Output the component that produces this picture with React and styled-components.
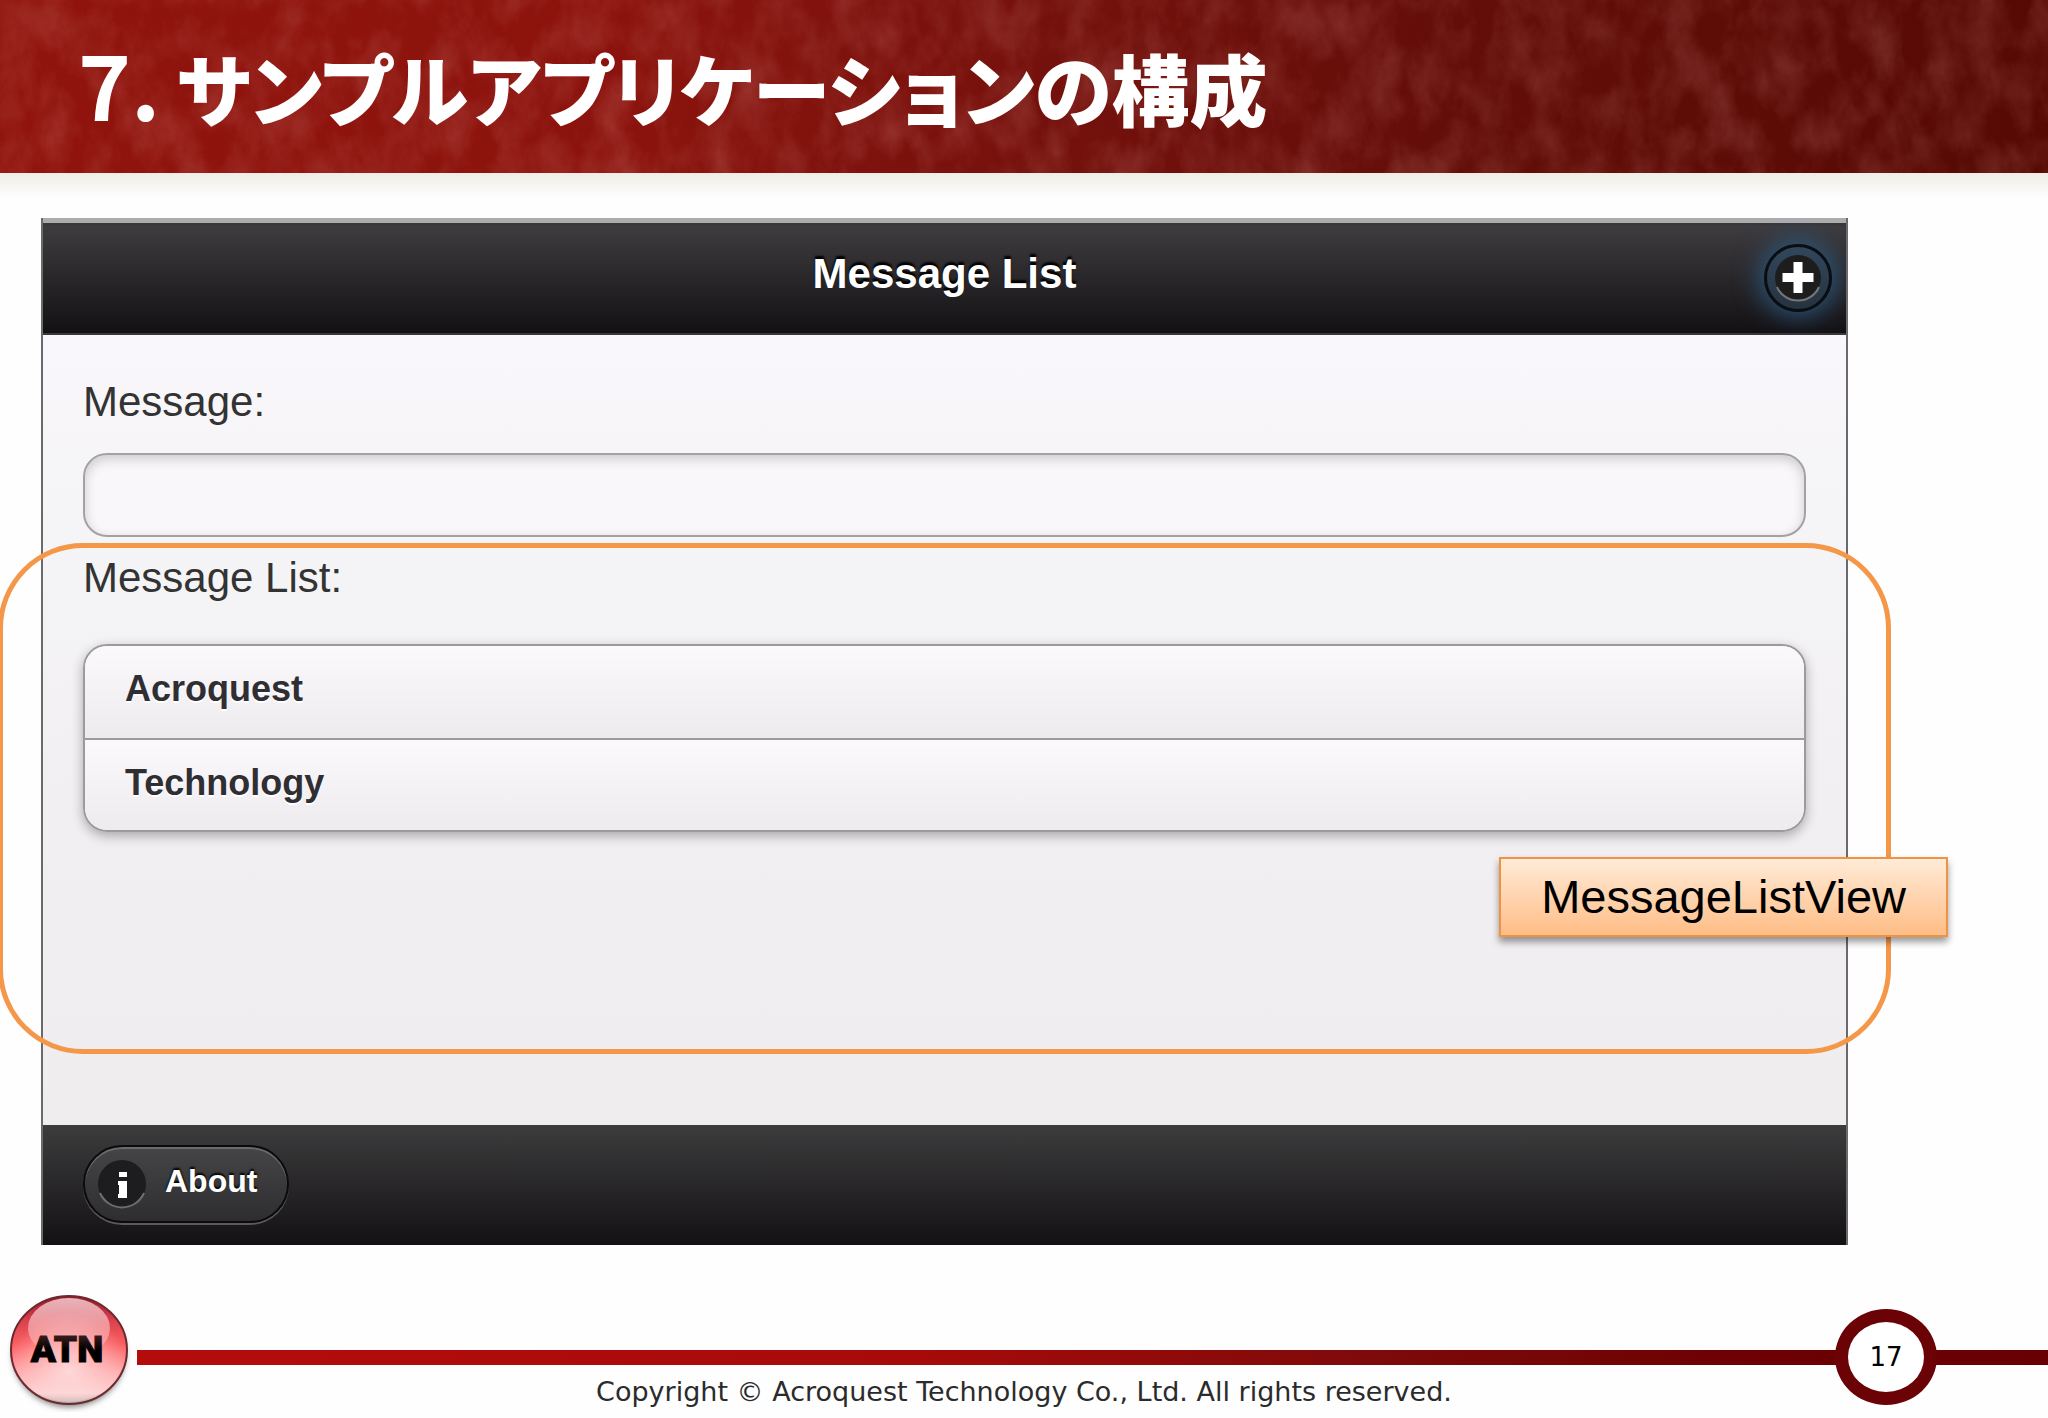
import React from "react";
import styled, { createGlobalStyle } from "styled-components";

const GlobalStyle = createGlobalStyle`
  *, *::before, *::after { box-sizing: border-box; }
  body { margin: 0; background: #fefefe; }
`;

const sans = `"Liberation Sans", Arial, sans-serif`;
const verdana = `Verdana, "DejaVu Sans", sans-serif`;

const Slide = styled.div`
  min-height: 100vh;
  display: flex;
  flex-direction: column;
  overflow: hidden;
  background: #fefefe;
  font-family: ${sans};
`;

const Banner = styled.header`
  position: relative;
  display: flex;
  align-items: center;
  height: 173px;
  padding: 0 78px 4px;
  background: linear-gradient(90deg, #90140d 0%, #8c130d 30%, #76110c 50%, #640e09 70%, #560903 100%);

  &::after {
    content: "";
    position: absolute;
    top: 100%;
    left: 0;
    right: 0;
    height: 26px;
    background: linear-gradient(#efeee6, #fefefe);
  }
`;

const Texture = styled.svg`
  position: absolute;
  inset: 0;
  width: 100%;
  height: 100%;
`;

const Title = styled.h1`
  position: relative;
  display: flex;
  align-items: baseline;
  gap: 16px;
  margin: 0;
  color: #fff;
  font: 900 78px/120px "Noto Sans CJK JP", sans-serif;
  font-feature-settings: "palt";
  white-space: nowrap;
`;

const Numeral = styled.span`
  font-size: 90px;
  font-weight: 700;
`;

const Stage = styled.main`
  flex: 1;
  padding: 45px 200px 0 41px;
`;

const AppFrame = styled.section`
  position: relative;
  display: flex;
  flex-direction: column;
  border: 2px solid #6b696c;
  border-width: 0 2px;
`;

const AppBar = styled.div`
  display: grid;
  grid-template-columns: 1fr auto 1fr;
  align-items: center;
  height: 117px;
  padding: 0 14px;
  overflow: hidden;
  border-top: 5px solid #adabad;
  border-bottom: 2px solid #39373a;
  background: linear-gradient(#3f3d40, #131114);
  box-shadow: inset 0 3px 0 #39383a;
`;

const AppTitle = styled.h2`
  grid-column: 2;
  margin: 0;
  padding-bottom: 8px;
  color: #fff;
  font: 700 42px/48px ${sans};
  text-shadow: 0 -3px 2px #000;
`;

const AddButton = styled.button`
  justify-self: end;
  display: grid;
  place-items: center;
  width: 68px;
  height: 68px;
  padding: 0;
  border: 3px solid #0a0d12;
  border-radius: 50%;
  background: linear-gradient(#31475c, #26333f);
  box-shadow: 0 0 26px 4px #2c587f;
`;

const Content = styled.div`
  display: flex;
  flex-direction: column;
  height: 790px;
  padding: 43px 40px 0;
  background: linear-gradient(#f9f7fb, #f5f4f6 25%, #f1eff2 60%, #efedee);
  color: #333;
`;

const FieldLabel = styled.label`
  font: 400 42px/48px ${sans};
`;

const ListLabel = styled.h3`
  margin: 0;
  font: 400 42px/48px ${sans};
`;

const Field = styled.input`
  width: 100%;
  height: 84px;
  margin: 27px 0 17px;
  padding: 0 24px;
  border: 2px solid #a3a1a4;
  border-radius: 24px;
  outline: none;
  background: #f9f7fa;
  box-shadow: inset 0 4px 12px rgba(0, 0, 0, 0.18);
  color: #333;
  font: 400 42px/48px ${sans};
`;

const List = styled.ul`
  margin: 42px 0 0;
  padding: 0;
  border: 2px solid #9c9a9d;
  border-radius: 24px;
  overflow: hidden;
  list-style: none;
  box-shadow: 0 4px 12px rgba(0, 0, 0, 0.3);
`;

const ListItem = styled.li`
  height: 92px;
  padding: 0 40px;
  background: linear-gradient(#fbf9fc, #edebee);
  color: #2f2e33;
  font: 700 36px/86px ${sans};
  text-shadow: 0 2px 0 #fff;

  & + & {
    border-top: 2px solid #9c9a9d;
  }
`;

const ToolBar = styled.div`
  display: flex;
  align-items: center;
  height: 120px;
  padding: 0 40px 3px;
  background: linear-gradient(#3d3c3d, #131114);
`;

const AboutButton = styled.button`
  display: flex;
  align-items: center;
  gap: 18px;
  height: 78px;
  padding: 0 30px 0 12px;
  border: 2px solid #0b0a0c;
  border-radius: 40px;
  background: linear-gradient(#454446, #2e2d2f);
  box-shadow: inset 0 2px 0 #6a696b, 0 2px 0 #5a595b;
  color: #fff;
  font: 700 32px/40px ${sans};
  text-shadow: 0 -2px 2px #000;
`;

const ButtonText = styled.span`
  padding-bottom: 5px;
`;

const Outline = styled.div`
  position: absolute;
  top: 325px;
  bottom: 191px;
  left: -45px;
  right: -45px;
  border: 5px solid #f59749;
  border-radius: 85px;
  pointer-events: none;
`;

const Callout = styled.div`
  position: absolute;
  top: 639px;
  right: -102px;
  padding: 11px 40px;
  border: 2px solid #ee9244;
  background: linear-gradient(#ffebd7, #ffbd86);
  box-shadow: 0 5px 7px rgba(0, 0, 0, 0.4);
  color: #000;
  font: 400 47px/54px ${sans};
`;

const Footer = styled.footer`
  display: grid;
  grid-template-columns: 137px 1fr;
  align-items: center;
`;

const Logo = styled.svg`
  display: block;
  width: 126px;
  height: 126px;
  margin-left: 6px;
`;

const Rule = styled.div`
  display: flex;
  align-items: center;
  justify-content: flex-end;
  height: 15px;
  margin-top: 16px;
  padding-right: 111px;
  background: linear-gradient(90deg, #b40c0c, #a80a0a 40%, #7e0a0a 65%, #6c0003 85%, #680003);
`;

const PageNumber = styled.div`
  display: grid;
  place-items: center;
  flex: none;
  width: 102px;
  height: 96px;
  border: 13px solid #6b0306;
  border-radius: 50%;
  background: #fff;
  color: #000;
  font: 400 26px/30px ${verdana};
`;

const Copyright = styled.small`
  grid-column: 1 / -1;
  margin-top: -36px;
  padding-bottom: 10px;
  color: #2b2b2b;
  font: 400 27px/32px ${verdana};
  text-align: center;
`;

function BannerTexture() {
  return (
    <Texture aria-hidden="true">
      <filter id="marble" x="0" y="0" width="100%" height="100%">
        <feTurbulence type="fractalNoise" baseFrequency="0.03 0.02" numOctaves="6" seed="8" />
        <feColorMatrix values="0 0 0 0 0.7  0 0 0 0 0.28  0 0 0 0 0.26  0.3 0.26 0 0 -0.22" />
      </filter>
      <rect width="100%" height="100%" filter="url(#marble)" />
    </Texture>
  );
}

function PlusIcon() {
  return (
    <svg width="50" height="54" viewBox="0 0 50 54" aria-hidden="true">
      <circle cx="25" cy="27" r="23" fill="#1d1d1e" />
      <path d="M4 36a23 23 0 0 0 42 0" fill="none" stroke="#77777a" strokeWidth="2" />
      <path d="M25 11v31M9.500 26.500h31" stroke="#fff" strokeWidth="9" />
    </svg>
  );
}

function InfoIcon() {
  return (
    <svg width="50" height="52" viewBox="0 0 50 52" aria-hidden="true">
      <circle cx="25" cy="26" r="24" fill="#1d1c1e" />
      <path d="M3 35a24 24 0 0 0 44 0" fill="none" stroke="#6d6c6e" strokeWidth="2" />
      <path d="M22 14h8v5h-8zM21 23h9v17h-9v-4h1v-9h-1z" fill="#fff" />
    </svg>
  );
}

function AtnLogo() {
  return (
    <Logo viewBox="0 0 126 126" role="img" aria-label="ATN">
      <defs>
        <linearGradient id="ball" x1="0" y1="0" x2="0" y2="1">
          <stop offset="0" stopColor="#9c1626" />
          <stop offset="0.22" stopColor="#d8404c" />
          <stop offset="0.45" stopColor="#fb6062" />
          <stop offset="0.7" stopColor="#ffa6a8" />
          <stop offset="0.9" stopColor="#fbd0d0" />
          <stop offset="1" stopColor="#a8a09e" />
        </linearGradient>
        <linearGradient id="gloss" x1="0" y1="0" x2="0" y2="1">
          <stop offset="0" stopColor="#ffe8ea" stopOpacity="0.75" />
          <stop offset="1" stopColor="#ffd0d0" stopOpacity="0.25" />
        </linearGradient>
        <radialGradient id="glow" cx="0.5" cy="0.7" r="0.55">
          <stop offset="0" stopColor="#ffdcdc" stopOpacity="0.9" />
          <stop offset="1" stopColor="#ffdcdc" stopOpacity="0" />
        </radialGradient>
        <linearGradient id="ink" x1="0" y1="0" x2="0" y2="1">
          <stop offset="0" stopColor="#5a2c2c" />
          <stop offset="0.5" stopColor="#000" />
        </linearGradient>
        <filter id="soft">
          <feGaussianBlur stdDeviation="3" />
        </filter>
      </defs>
      <ellipse cx="63" cy="69" rx="56" ry="52" fill="#444" opacity="0.7" filter="url(#soft)" />
      <ellipse cx="63" cy="64" rx="58" ry="54" fill="url(#ball)" stroke="#6c2a30" strokeWidth="2" />
      <ellipse cx="63" cy="64" rx="56" ry="52" fill="url(#glow)" />
      <ellipse cx="63" cy="42" rx="41" ry="30" fill="url(#gloss)" />
      <text
        x="61"
        y="76"
        textAnchor="middle"
        fill="url(#ink)"
        stroke="url(#ink)"
        strokeWidth="1"
        fontFamily="Roboto, sans-serif"
        fontWeight="900"
        fontSize="37"
      >
        ATN
      </text>
    </Logo>
  );
}

const messages = ["Acroquest", "Technology"];

export default function App() {
  return (
    <Slide>
      <GlobalStyle />
      <Banner>
        <BannerTexture />
        <Title>
          <Numeral>7.</Numeral>
          サンプルアプリケーションの構成
        </Title>
      </Banner>
      <Stage>
        <AppFrame>
          <AppBar>
            <AppTitle>Message List</AppTitle>
            <AddButton type="button" aria-label="Add">
              <PlusIcon />
            </AddButton>
          </AppBar>
          <Content>
            <FieldLabel htmlFor="message">Message:</FieldLabel>
            <Field id="message" type="text" />
            <ListLabel>Message List:</ListLabel>
            <List>
              {messages.map((message) => (
                <ListItem key={message}>{message}</ListItem>
              ))}
            </List>
          </Content>
          <ToolBar>
            <AboutButton type="button">
              <InfoIcon />
              <ButtonText>About</ButtonText>
            </AboutButton>
          </ToolBar>
          <Outline />
          <Callout>MessageListView</Callout>
        </AppFrame>
      </Stage>
      <Footer>
        <AtnLogo />
        <Rule>
          <PageNumber>17</PageNumber>
        </Rule>
        <Copyright>Copyright © Acroquest Technology Co., Ltd. All rights reserved.</Copyright>
      </Footer>
    </Slide>
  );
}
